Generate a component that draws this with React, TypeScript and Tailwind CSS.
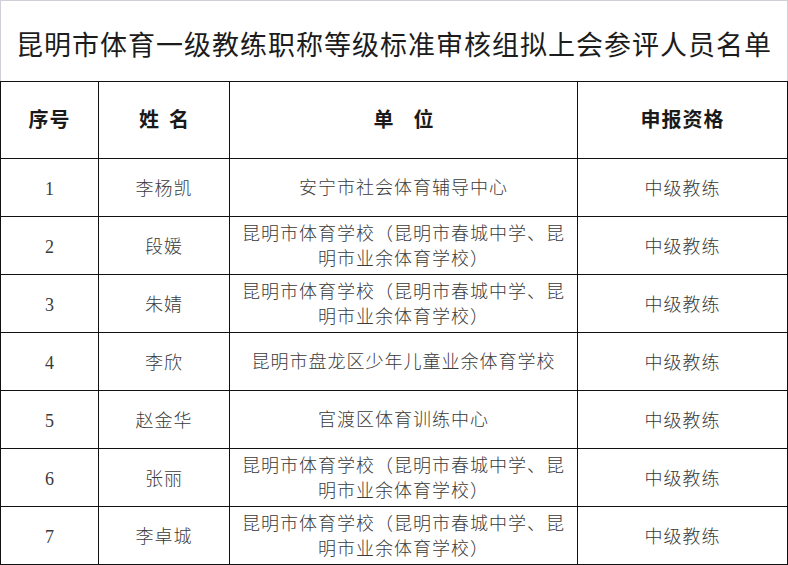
import React from "react";

const rows: { no: string; name: string; unit: string[]; level: string }[] = [
  { no: "1", name: "李杨凯", unit: ["安宁市社会体育辅导中心"], level: "中级教练" },
  { no: "2", name: "段媛", unit: ["昆明市体育学校（昆明市春城中学、昆", "明市业余体育学校）"], level: "中级教练" },
  { no: "3", name: "朱婧", unit: ["昆明市体育学校（昆明市春城中学、昆", "明市业余体育学校）"], level: "中级教练" },
  { no: "4", name: "李欣", unit: ["昆明市盘龙区少年儿童业余体育学校"], level: "中级教练" },
  { no: "5", name: "赵金华", unit: ["官渡区体育训练中心"], level: "中级教练" },
  { no: "6", name: "张丽", unit: ["昆明市体育学校（昆明市春城中学、昆", "明市业余体育学校）"], level: "中级教练" },
  { no: "7", name: "李卓城", unit: ["昆明市体育学校（昆明市春城中学、昆", "明市业余体育学校）"], level: "中级教练" },
];

const serif = { fontFamily: '"Liberation Serif", "Noto Sans CJK SC", serif' };

export default function App() {
  return (
    <div className="w-[788px] h-[565px] bg-white overflow-hidden">
      <div className="h-[81px] border-t border-l border-r border-[#cfd0d8] flex items-center justify-center pt-[4px]">
        <h1
          className="text-[27px] tracking-[1px] text-[#1c1c1c] font-normal leading-none"
          style={{ fontFamily: '"Noto Sans CJK SC", sans-serif' }}
        >
          昆明市体育一级教练职称等级标准审核组拟上会参评人员名单
        </h1>
      </div>
      <div
        className="grid grid-cols-[98px_131px_348px_210px] border-l border-t border-[#111]"
        style={serif}
      >
        <div className="h-[77px] border-r border-b border-[#111] flex items-center justify-center text-[20px] font-bold text-[#1a1a1a] tracking-[1px]">
          序号
        </div>
        <div className="h-[77px] border-r border-b border-[#111] flex items-center justify-center gap-[10px] text-[20px] font-bold text-[#1a1a1a]">
          <span>姓</span>
          <span>名</span>
        </div>
        <div className="h-[77px] border-r border-b border-[#111] flex items-center justify-center gap-[20px] text-[20px] font-bold text-[#1a1a1a]">
          <span>单</span>
          <span>位</span>
        </div>
        <div className="h-[77px] border-r border-b border-[#111] flex items-center justify-center text-[20px] font-bold text-[#1a1a1a] tracking-[1px]">
          申报资格
        </div>
        {rows.map((r) => (
          <React.Fragment key={r.no}>
            <div className="h-[58px] border-r border-b border-[#111] flex items-center justify-center pt-[3px] text-[18px] text-[#3a3a3a]">
              {r.no}
            </div>
            <div className="h-[58px] border-r border-b border-[#111] flex items-center justify-center pt-[3px] text-[18px] tracking-[1px] text-[#3a3a3a] font-light">
              {r.name}
            </div>
            <div className="h-[58px] border-r border-b border-[#111] flex flex-col items-center justify-center pt-[2px] text-[18px] leading-[25px] tracking-[1px] text-[#3a3a3a] font-light">
              {r.unit.map((u, i) => (
                <span key={i} className="block whitespace-nowrap">
                  {u}
                </span>
              ))}
            </div>
            <div className="h-[58px] border-r border-b border-[#111] flex items-center justify-center pt-[3px] text-[18px] tracking-[1px] text-[#3a3a3a] font-light">
              {r.level}
            </div>
          </React.Fragment>
        ))}
      </div>
    </div>
  );
}
